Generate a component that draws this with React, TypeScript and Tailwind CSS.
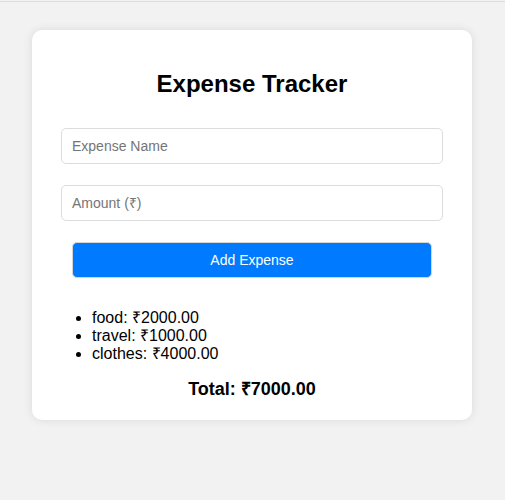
import { useState } from 'react';

const initial = [
  { name: 'food', amount: 2000 },
  { name: 'travel', amount: 1000 },
  { name: 'clothes', amount: 4000 },
];

export default function App() {
  const [expenses] = useState(initial);
  const total = expenses.reduce((sum, e) => sum + e.amount, 0);

  return (
    <div className="min-h-screen bg-[#f2f2f2] pt-px font-['Liberation_Sans',Arial,sans-serif] text-black">
      <div className="border-t border-[#dcdcdc]" />
      <div className="ml-8 mt-[28px] w-[440px] rounded-[10px] bg-white p-5 shadow-[0_0_10px_rgba(0,0,0,0.1)]">
        <h2 className="mt-5 text-center text-2xl font-bold leading-[27px]">Expense Tracker</h2>

        <div className="mt-[31px] flex flex-col">
          <input
            type="text"
            placeholder="Expense Name"
            className="ml-[9px] h-9 w-[382px] rounded-[5px] border border-[#dcdcdc] px-[10px] text-sm placeholder:text-[#757575] outline-none"
          />
          <input
            type="number"
            placeholder="Amount (₹)"
            className="ml-[9px] mt-[21px] h-9 w-[382px] rounded-[5px] border border-[#dcdcdc] px-[10px] text-sm placeholder:text-[#757575] outline-none"
          />
          <button className="ml-5 mt-[21px] h-9 w-[360px] rounded-[5px] border border-[#d6d6d6] bg-[#007bff] text-sm text-white">
            Add Expense
          </button>
        </div>

        <ul className="mt-[31px] list-disc pl-10 text-base leading-[18px]">
          {expenses.map((e) => (
            <li key={e.name}>
              {e.name}: ₹{e.amount.toFixed(2)}
            </li>
          ))}
        </ul>

        <p className="mt-4 text-center text-lg font-bold leading-[21px]">
          Total: ₹{total.toFixed(2)}
        </p>
      </div>
    </div>
  );
}
